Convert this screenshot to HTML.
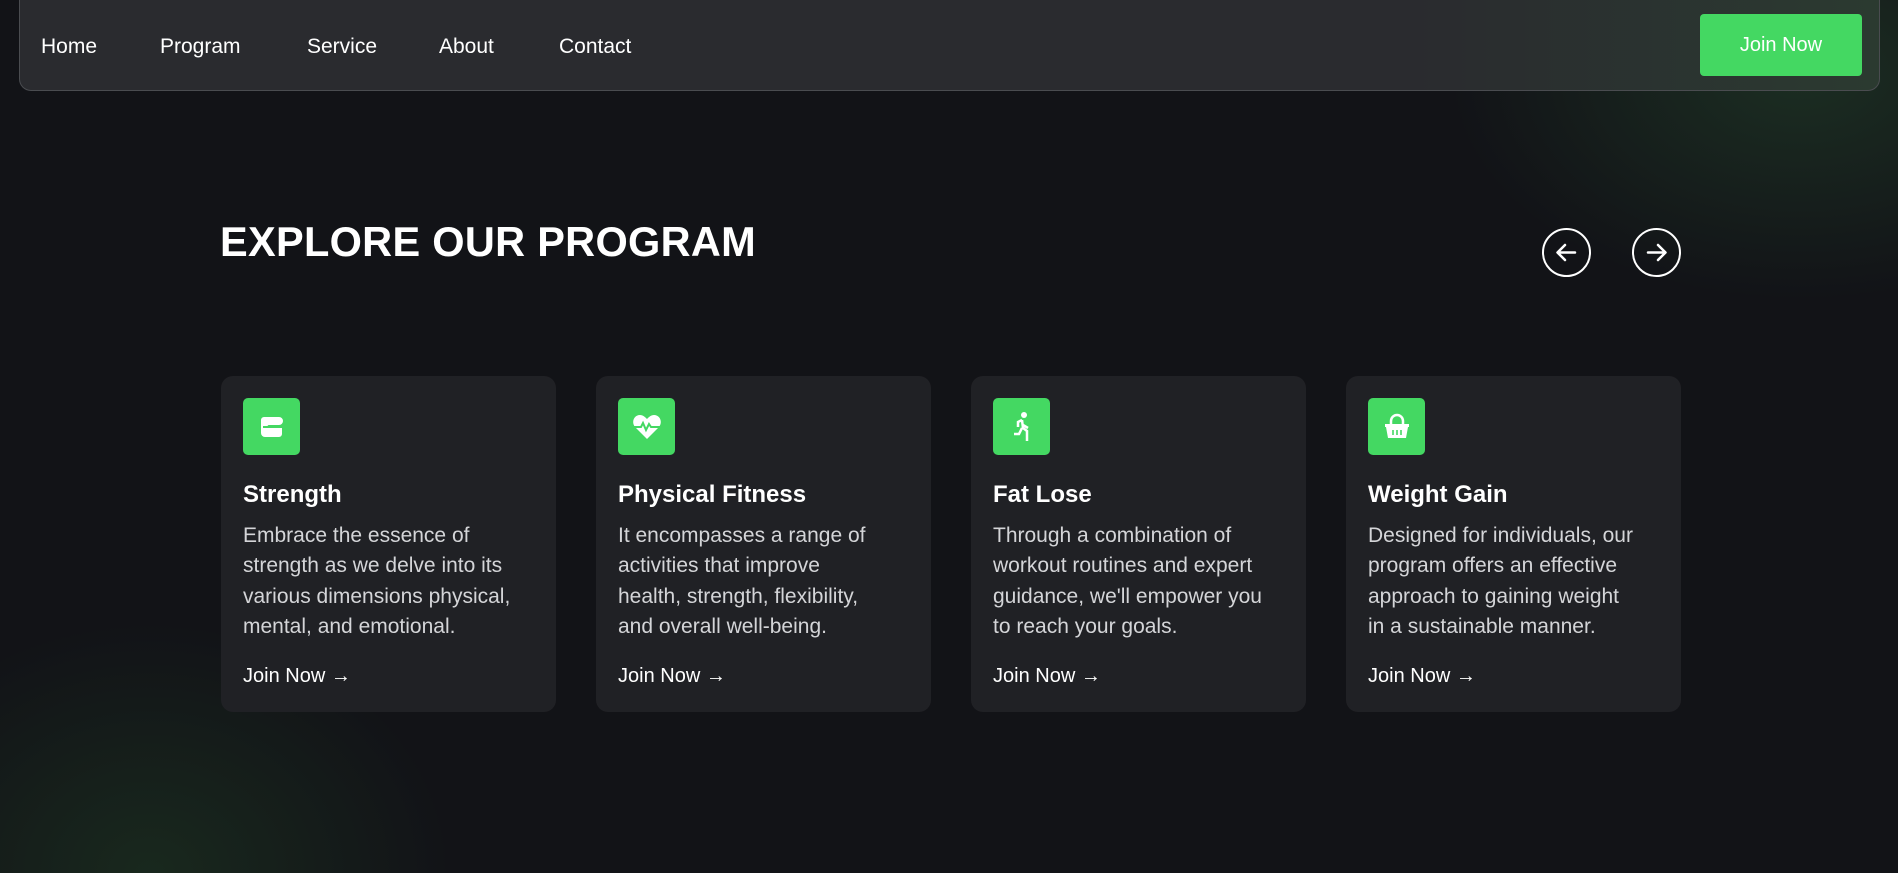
<!DOCTYPE html>
<html><head><meta charset="utf-8"><style>
*{margin:0;padding:0;box-sizing:border-box}
html,body{width:1898px;height:873px;overflow:hidden}
body{background:#121317;font-family:"Liberation Sans",sans-serif;color:#fff;position:relative}
.bg{position:absolute;left:0;top:0;width:1898px;height:873px;overflow:hidden}
.glow1{position:absolute;left:-150px;top:560px;width:600px;height:313px;background:radial-gradient(600px 500px at 50% 100%,rgba(40,90,45,.3),rgba(18,19,23,0) 50%);}
.glow2{position:absolute;left:1450px;top:0;width:448px;height:300px;background:radial-gradient(700px 450px at 350px 75px,rgba(45,95,55,.35),rgba(18,19,23,0) 50%);}
nav{position:absolute;left:19px;top:0;width:1861px;height:91px;background:linear-gradient(90deg,#2a2b2f 0%,#2a2b2f 75%,#2b3a30 100%);border:1px solid #4a4c50;border-top:none;border-radius:0 0 12px 12px}
nav a{position:absolute;top:35px;font-size:21px;color:#fff;text-decoration:none}
.btn{position:absolute;left:1680px;top:14px;width:162px;height:62px;background:#44d862;border-radius:4px;color:#fff;font-size:20px;display:flex;align-items:center;justify-content:center}
h1{position:absolute;left:220px;top:218px;font-size:41.5px;font-weight:bold;letter-spacing:.3px}
.arr{position:absolute;top:228px;width:49px;height:49px;border:2px solid #fff;border-radius:50%}
.card{position:absolute;top:376px;width:335px;height:336px;background:#202125;border-radius:12px}
.ic{position:absolute;left:22px;top:22px;width:57px;height:57px;background:#44d862;border-radius:5px;display:flex;align-items:center;justify-content:center}
.t{position:absolute;left:22px;top:105px;font-size:24px;font-weight:bold}
.p{position:absolute;left:22px;top:145px;width:320px;font-size:21px;line-height:30.3px;color:#d4d5d8;white-space:nowrap}
.j{position:absolute;left:22px;top:289px;font-size:20px;color:#fff}
</style></head><body>
<div class="bg"><div class="glow1"></div><div class="glow2"></div></div>
<nav>
<a style="left:21px">Home</a><a style="left:140px">Program</a><a style="left:287px">Service</a><a style="left:419px">About</a><a style="left:539px">Contact</a>
<div class="btn">Join Now</div>
</nav>
<h1>EXPLORE OUR PROGRAM</h1>
<div class="arr" style="left:1542px"><svg width="45" height="45" viewBox="0 0 45 45"><path d="M31 22.5H14M21 15l-7.5 7.5L21 30" stroke="#fff" stroke-width="2.5" fill="none" stroke-linecap="round" stroke-linejoin="round"/></svg></div>
<div class="arr" style="left:1632px"><svg width="45" height="45" viewBox="0 0 45 45"><path d="M14 22.5H31M24 15l7.5 7.5L24 30" stroke="#fff" stroke-width="2.5" fill="none" stroke-linecap="round" stroke-linejoin="round"/></svg></div>

<div class="card" style="left:221px">
<div class="ic"><svg width="30" height="30" viewBox="0 0 30 30"><path d="M4 8a3 3 0 0 1 3-3h15a4 4 0 0 1 0 8h-10a1.5 1.5 0 0 0 0 3h13v6a3 3 0 0 1-3 3H8a4 4 0 0 1-4-4z" fill="#fff"/><path d="M6 15h7" stroke="#44d862" stroke-width="2"/></svg></div>
<div class="t">Strength</div>
<div class="p">Embrace the essence of<br>strength as we delve into its<br>various dimensions physical,<br>mental, and emotional.</div>
<div class="j">Join Now →</div></div>

<div class="card" style="left:596px">
<div class="ic"><svg width="34" height="34" viewBox="0 0 34 34"><path d="M17 29L5 17C1 12 4 5 10 5c3 0 5 2 7 4 2-2 4-4 7-4 6 0 9 7 5 12z" fill="#fff"/><path d="M3 17h8l2-4 3 7 3-6 2 3h10" stroke="#44d862" stroke-width="2" fill="none"/></svg></div>
<div class="t">Physical Fitness</div>
<div class="p">It encompasses a range of<br>activities that improve<br>health, strength, flexibility,<br>and overall well-being.</div>
<div class="j">Join Now →</div></div>

<div class="card" style="left:971px">
<div class="ic"><svg width="30" height="34" viewBox="0 0 30 34"><circle cx="17" cy="5" r="3" fill="#fff"/><path d="M15 10l-4 2v5M15 10l1 8 4 3v10M16 15l5 3M15 18l-3 6H7" stroke="#fff" stroke-width="2.5" fill="none"/></svg></div>
<div class="t">Fat Lose</div>
<div class="p">Through a combination of<br>workout routines and expert<br>guidance, we'll empower you<br>to reach your goals.</div>
<div class="j">Join Now →</div></div>

<div class="card" style="left:1346px">
<div class="ic"><svg width="32" height="32" viewBox="0 0 32 32"><path d="M10 13V10a6 6 0 0 1 12 0v3" stroke="#fff" stroke-width="2.5" fill="none"/><path d="M4 13h24v3h-1l-2 11H7L5 16H4z" fill="#fff"/><path d="M12 19v5M16 19v5M20 19v5" stroke="#44d862" stroke-width="1.6"/></svg></div>
<div class="t">Weight Gain</div>
<div class="p">Designed for individuals, our<br>program offers an effective<br>approach to gaining weight<br>in a sustainable manner.</div>
<div class="j">Join Now →</div></div>
</body></html>
